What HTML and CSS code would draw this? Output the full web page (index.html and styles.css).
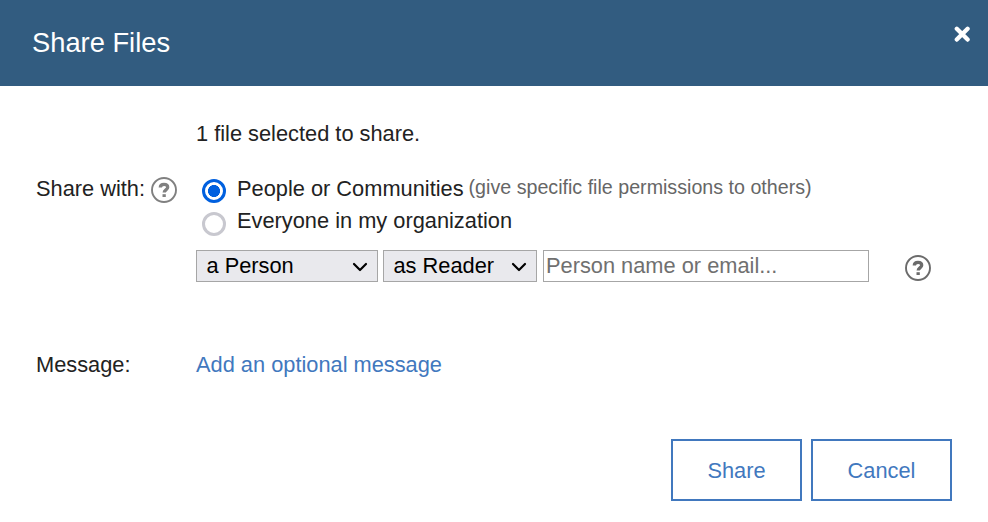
FILE: index.html
```html
<!DOCTYPE html>
<html lang="en">
<head>
<meta charset="utf-8">
<title>Share Files</title>
<link rel="stylesheet" href="styles.css">
</head>
<body>
<svg class="defs" aria-hidden="true">
  <symbol id="help" viewBox="0 0 28 28">
    <circle cx="14" cy="14" r="12" fill="none" stroke="currentColor" stroke-width="1.9"/>
    <path d="M10.300 11.600C10.300 9.200 11.700 8.300 14 8.300c2.400 0 3.700 1.200 3.700 2.900 0 2.700-3.500 2.700-3.500 5.400" fill="none" stroke="currentColor" stroke-width="3.300"/>
    <path d="M12.500 18.200h3.300v2.800h-3.300z" fill="currentColor"/>
  </symbol>
  <symbol id="chevron" viewBox="0 0 16 12">
    <path d="M2 3l6 6 6-6" fill="none" stroke="#000" stroke-width="2.200" stroke-linecap="round" stroke-linejoin="round"/>
  </symbol>
</svg>
<form class="dialog">
  <header class="header">
    <h1 class="title">Share Files</h1>
    <button class="close" type="button" aria-label="Close">
      <svg viewBox="0 0 17 17"><path d="M2.800 2.800l10.800 10.800M13.600 2.800L2.800 13.600" stroke="#fff" stroke-width="4.300" stroke-linecap="round"/></svg>
    </button>
  </header>
  <main class="fields">
    <p class="summary">1 file selected to share.</p>
    <div class="label">Share with: <svg class="help"><use href="#help"/></svg></div>
    <div class="share">
      <label class="option"><input class="radio" type="radio" name="with" checked><span>People or Communities</span><span class="hint">(give specific file permissions to others)</span></label>
      <label class="option"><input class="radio" type="radio" name="with"><span>Everyone in my organization</span></label>
      <div class="controls">
        <div class="select person"><span>a Person</span><svg class="chevron"><use href="#chevron"/></svg></div>
        <div class="select role"><span>as Reader</span><svg class="chevron"><use href="#chevron"/></svg></div>
        <input class="name" type="text" placeholder="Person name or email...">
        <svg class="help dark"><use href="#help"/></svg>
      </div>
    </div>
    <div class="label message">Message:</div>
    <div class="message"><a class="link">Add an optional message</a></div>
  </main>
  <footer class="actions">
    <button class="button share-button" type="button">Share</button>
    <button class="button cancel-button" type="button">Cancel</button>
  </footer>
</form>
</body>
</html>
```
FILE: styles.css
```css
* { box-sizing: border-box; }
body {
  margin: 0;
  background: #fff;
  color: #222;
  font: 21.800px/32px "Liberation Sans", Arial, sans-serif;
}
.defs { display: none; }
.dialog { height: 522px; display: flex; flex-direction: column; }
.header {
  height: 86px;
  padding: 0 17px 0 32px;
  display: flex;
  justify-content: space-between;
  background: #325c80;
}
.title { margin: 27px 0 0; font-size: 27.300px; font-weight: 400; color: #fff; }
.close { margin: 26px 0 0; padding: 0; width: 17px; height: 17px; border: 0; background: none; }
.close svg { display: block; width: 17px; height: 17px; }
.fields {
  padding: 32px 36px 0;
  display: grid;
  grid-template-columns: 160px 1fr;
  align-content: start;
}
.summary { grid-column: 2; margin: 0 0 23px; }
.label { display: flex; align-items: flex-start; gap: 5px; }
.help { flex: none; width: 28px; height: 28px; margin-top: 3px; color: #808080; }
.option { display: flex; height: 32px; white-space: nowrap; }
.radio {
  appearance: none;
  flex: none;
  width: 24px;
  height: 24px;
  margin: 6px 11px 0 6px;
  border: 3px solid #c8c8cf;
  border-radius: 50%;
  background: #fff;
}
.option + .option .radio { margin-top: 7px; }
.radio:checked {
  border-color: #0060df;
  background: radial-gradient(circle, #0060df 5.700px, #fff 6.300px);
}
.hint { margin-left: 5px; font-size: 19.660px; line-height: 29px; color: #666; }
.controls { display: flex; margin-top: 13px; height: 32px; }
.select {
  display: flex;
  justify-content: space-between;
  align-items: center;
  margin-right: 5px;
  padding: 0 9px 0 9.500px;
  border: 1px solid #a6a6a6;
  background: #e9e9ed;
  color: #000;
  line-height: 30px;
}
.person { width: 182px; }
.role { width: 154px; margin-right: 6px; }
.chevron { width: 16px; height: 12px; margin-top: 2px; }
.name {
  width: 326px;
  height: 32px;
  padding: 0 2px;
  border: 1px solid #a6a6a6;
  font: inherit;
  line-height: 30px;
}
.name::placeholder { color: #707070; opacity: 1; }
.dark { margin: 4px 0 0 35px; color: #6b6b6b; }
.message { margin-top: 67px; }
.link { color: #4178be; }
.actions { display: flex; justify-content: flex-end; gap: 9px; margin-top: auto; padding: 0 36px 21px; }
.button {
  height: 62px;
  padding: 2px 0 0;
  border: 2px solid #4178be;
  background: #fff;
  color: #4178be;
  font: inherit;
}
.share-button { width: 131px; }
.cancel-button { width: 141px; }
```
